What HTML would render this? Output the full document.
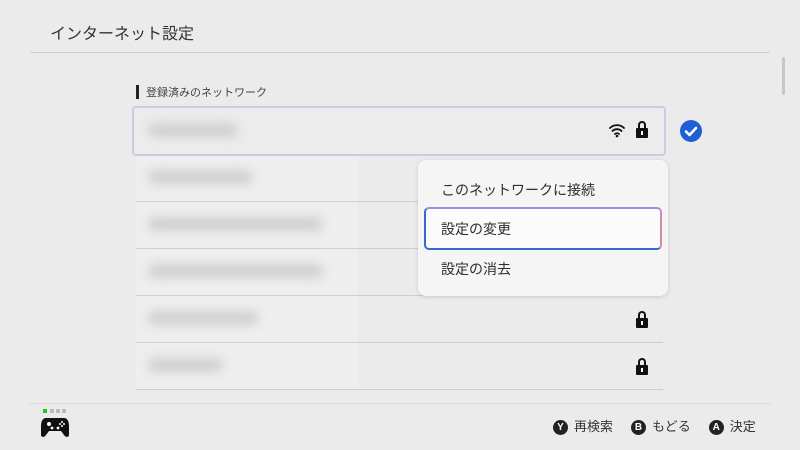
<!DOCTYPE html>
<html><head><meta charset="utf-8"><style>
body{margin:0;width:800px;height:450px;background:#ebebeb;font-family:"Liberation Sans","Noto Sans CJK JP",sans-serif;position:relative;overflow:hidden;color:#2d2d2d}
.a{position:absolute}
.line{position:absolute;height:1px;background:#cfcfcf}
.blur{position:absolute;height:14px;background:#d0d0d0;border-radius:7px;filter:blur(5px)}
.lock{position:absolute;width:12px;height:10px;background:#111;border-radius:1px}
.lock:before{content:"";position:absolute;left:2px;top:-7px;width:4px;height:6px;border:2px solid #111;border-bottom:none;border-radius:4px 4px 0 0}
.lock:after{content:"";position:absolute;left:5px;top:3px;width:2px;height:4px;background:#fff}
.btn{display:inline-block;width:15px;height:15px;border-radius:50%;background:#222;color:#fff;font-size:10px;font-weight:bold;text-align:center;line-height:15px;vertical-align:middle;margin-right:6px}
</style></head><body>
<div class="a" style="left:50px;top:20px;font-size:16px;color:#333">インターネット設定</div>
<div class="line" style="left:30px;top:52px;width:740px"></div>
<div class="a" style="left:782px;top:57px;width:3px;height:38px;background:#c6c6c6;border-radius:2px"></div>
<div class="a" style="left:136px;top:85px;width:3px;height:14px;background:#222"></div>
<div class="a" style="left:146px;top:84px;font-size:11px;color:#444">登録済みのネットワーク</div>
<div class="a" style="left:136px;top:155px;width:222px;height:235px;background:#eeeeee"></div>
<div class="line" style="left:136px;top:201px;width:527px"></div>
<div class="line" style="left:136px;top:248px;width:527px"></div>
<div class="line" style="left:136px;top:295px;width:527px"></div>
<div class="line" style="left:136px;top:342px;width:527px"></div>
<div class="line" style="left:136px;top:389px;width:527px"></div>
<div class="a" style="left:132px;top:106px;width:530px;height:46px;border:2px solid #c8cde2;border-radius:4px;background:#ececec"></div>
<div class="blur" style="left:148px;top:123px;width:90px"></div>
<div class="blur" style="left:148px;top:170px;width:105px"></div>
<div class="blur" style="left:148px;top:217px;width:175px"></div>
<div class="blur" style="left:148px;top:264px;width:175px"></div>
<div class="blur" style="left:148px;top:311px;width:110px"></div>
<div class="blur" style="left:148px;top:358px;width:75px"></div>
<svg class="a" style="left:608px;top:122px" width="18" height="16" viewBox="0 0 18 16"><path d="M2 6a10 10 0 0 1 14 0M4.5 9a6.5 6.5 0 0 1 9 0M7 12a3 3 0 0 1 4 0" stroke="#111" stroke-width="1.8" fill="none" stroke-linecap="round"/><circle cx="9" cy="14" r="1.3" fill="#111"/></svg>
<div class="lock" style="left:636px;top:128px"></div>
<div class="lock" style="left:636px;top:318px"></div>
<div class="lock" style="left:636px;top:365px"></div>
<svg class="a" style="left:679px;top:119px" width="24" height="24"><circle cx="12" cy="12" r="11" fill="#1f5fd6"/><path d="M7 12.5l3.5 3.5 6.5-7" stroke="#fff" stroke-width="2.6" fill="none" stroke-linecap="round" stroke-linejoin="round"/></svg>
<div class="a" style="left:418px;top:160px;width:250px;height:136px;background:#f5f5f5;border-radius:8px;box-shadow:0 1px 4px rgba(0,0,0,.15)"></div>
<div class="a" style="left:441px;top:180px;font-size:14px">このネットワークに接続</div>
<div class="a" style="left:424px;top:207px;width:234px;height:39px;border:2px solid #3a67d4;border-top-color:#9b8fe0;border-right-color:#d08aae;border-radius:5px;background:#fbfbfb"></div>
<div class="a" style="left:441px;top:219px;font-size:14px">設定の変更</div>
<div class="a" style="left:441px;top:259px;font-size:14px">設定の消去</div>
<div class="line" style="left:30px;top:403px;width:740px;background:#d8d8d8"></div>
<div class="a" style="left:43px;top:409px;width:4px;height:4px;background:#27c127"></div>
<div class="a" style="left:50px;top:409px;width:4px;height:4px;background:#bbb"></div>
<div class="a" style="left:56px;top:409px;width:4px;height:4px;background:#bbb"></div>
<div class="a" style="left:62px;top:409px;width:4px;height:4px;background:#bbb"></div>
<svg class="a" style="left:40px;top:416px" width="30" height="22" viewBox="0 0 30 22"><path d="M6 2h18c3 0 5 3 5 8l0 9c0 2-3 3-5 0l-3-4H9l-3 4c-2 3-5 2-5 0l0-9C1 5 3 2 6 2z" fill="#111"/><circle cx="9" cy="8" r="2" fill="#fff"/><circle cx="18" cy="12" r="1.4" fill="#fff"/><circle cx="22" cy="6" r="1" fill="#fff"/><circle cx="22" cy="10" r="1" fill="#fff"/><circle cx="20" cy="8" r="1" fill="#fff"/><circle cx="24" cy="8" r="1" fill="#fff"/><circle cx="12" cy="12" r="1.4" fill="#fff"/></svg>
<div class="a" style="left:553px;top:416px;font-size:13px;color:#333;white-space:nowrap"><span class="btn">Y</span>再検索<span style="display:inline-block;width:18px"></span><span class="btn">B</span>もどる<span style="display:inline-block;width:18px"></span><span class="btn">A</span>決定</div>
</body></html>
